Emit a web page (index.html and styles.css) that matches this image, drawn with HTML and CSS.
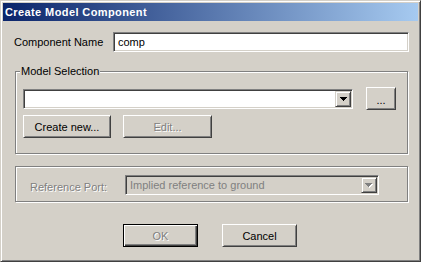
FILE: index.html
```html
<!DOCTYPE html>
<html>
<head>
<meta charset="utf-8">
<title>Create Model Component</title>
<link rel="stylesheet" href="styles.css">
</head>
<body>
<div class="window">
  <div class="titlebar"><span class="title">Create Model Component</span></div>
  <div class="content">
    <div class="name-row">
      <span class="name-label">Component Name</span>
      <div class="field textbox">comp</div>
    </div>
    <div class="group model-group">
      <span class="legend">Model Selection</span>
      <div class="combo-row">
        <div class="field combo model-combo">
          <span class="drop"><svg width="7" height="4" viewBox="0 0 7 4"><path d="M0 0h7v1h-1v1h-1v1h-1v1h-1v-1h-1v-1h-1v-1h-1z" fill="#000"/></svg></span>
        </div>
        <div class="btn browse">...</div>
      </div>
      <div class="btn-row">
        <div class="btn create">Create new...</div>
        <div class="btn edit disabled">Edit...</div>
      </div>
    </div>
    <div class="group port-group">
      <span class="port-label disabled">Reference Port:</span>
      <div class="field combo port-combo disabled-field">
        <span class="combo-text">Implied reference to ground</span>
        <span class="drop"><svg width="8" height="5" viewBox="0 0 8 5"><path d="M1 1h7v1h-1v1h-1v1h-1v1h-1v-1h-1v-1h-1v-1h-1z" fill="#fff"/><path d="M0 0h7v1h-1v1h-1v1h-1v1h-1v-1h-1v-1h-1v-1h-1z" fill="#808080"/></svg></span>
      </div>
    </div>
    <div class="footer">
      <div class="btn default disabled">OK</div>
      <div class="btn">Cancel</div>
    </div>
  </div>
</div>
</body>
</html>
```

FILE: styles.css
```css
* { box-sizing: border-box; }
html, body { margin: 0; padding: 0; }
body {
  width: 421px;
  height: 262px;
  overflow: hidden;
  background: #d4d0c8;
  font-family: "Liberation Sans", Arial, sans-serif;
  font-size: 11px;
  color: #000;
}
.window {
  width: 421px;
  height: 262px;
  border: 1px solid;
  border-color: #d4d0c8 #404040 #404040 #d4d0c8;
  box-shadow: inset 1px 1px #fff, inset -1px -1px #808080;
  padding: 2px;
  background: #d4d0c8;
}
.titlebar {
  height: 18px;
  background: linear-gradient(to right, #0a246a, #a6caf0);
  color: #fff;
  font-weight: bold;
  display: flex;
  align-items: center;
  padding-left: 2px;
  letter-spacing: 0.4px;
}
.content {
  padding: 0 9px 0 12px;
}
.name-row {
  display: flex;
  align-items: center;
  margin-top: 11px;
  height: 20px;
}
.name-label {
  width: 99px;
  margin-left: -1px;
}
.field {
  background: #fff;
  border: 1px solid;
  border-color: #808080 #fff #fff #808080;
  box-shadow: inset 1px 1px #404040, inset -1px -1px #d4d0c8;
  height: 20px;
}
.textbox {
  width: 296px;
  padding: 0 3px 0 4px;
  display: flex;
  align-items: center;
}
.group {
  position: relative;
  border: 1px solid #808080;
  box-shadow: inset 1px 1px #fff, 1px 1px #fff;
  width: 393px;
}
.legend {
  position: absolute;
  top: -7px;
  left: 4px;
  padding: 0 1px;
  line-height: 13px;
  background: #d4d0c8;
}
.model-group {
  margin-top: 19px;
  height: 83px;
  padding: 15px 0 0 7px;
}
.combo-row {
  display: flex;
  align-items: center;
  height: 23px;
}
.combo {
  display: flex;
  align-items: center;
  justify-content: space-between;
  padding: 1px;
}
.model-combo {
  width: 330px;
  justify-content: flex-end;
}
.drop {
  width: 16px;
  height: 16px;
  background: #d4d0c8;
  border: 1px solid;
  border-color: #d4d0c8 #404040 #404040 #d4d0c8;
  box-shadow: inset 1px 1px #fff, inset -1px -1px #808080;
  display: flex;
  align-items: center;
  justify-content: center;
}
.drop svg { display: block; }
.btn {
  height: 23px;
  background: #d4d0c8;
  border: 1px solid;
  border-color: #fff #404040 #404040 #fff;
  box-shadow: inset 1px 1px #d4d0c8, inset -1px -1px #808080;
  display: flex;
  align-items: center;
  justify-content: center;
}
.browse {
  width: 30px;
  margin-left: 13px;
  padding-top: 2px;
}
.btn-row {
  display: flex;
  margin-top: 5px;
}
.create { width: 88px; }
.edit { width: 89px; margin-left: 12px; }
.disabled {
  color: #808080;
  text-shadow: 1px 1px #fff;
}
.port-group {
  margin-top: 12px;
  height: 36px;
  display: flex;
  align-items: flex-start;
  padding: 8px 0 0 14px;
}
.port-label {
  width: 95px;
  line-height: 13px;
  margin-top: 6px;
}
.port-combo {
  width: 254px;
}
.disabled-field {
  background: #d4d0c8;
}
.combo-text {
  padding-left: 3px;
  color: #808080;
}
.footer {
  display: flex;
  gap: 24px;
  margin-top: 22px;
  padding-left: 108px;
}
.footer .btn { width: 75px; }
.default {
  border: 1px solid #000;
  box-shadow: inset 1px 1px #fff, inset -1px -1px #404040, inset -2px -2px #808080;
}
```
